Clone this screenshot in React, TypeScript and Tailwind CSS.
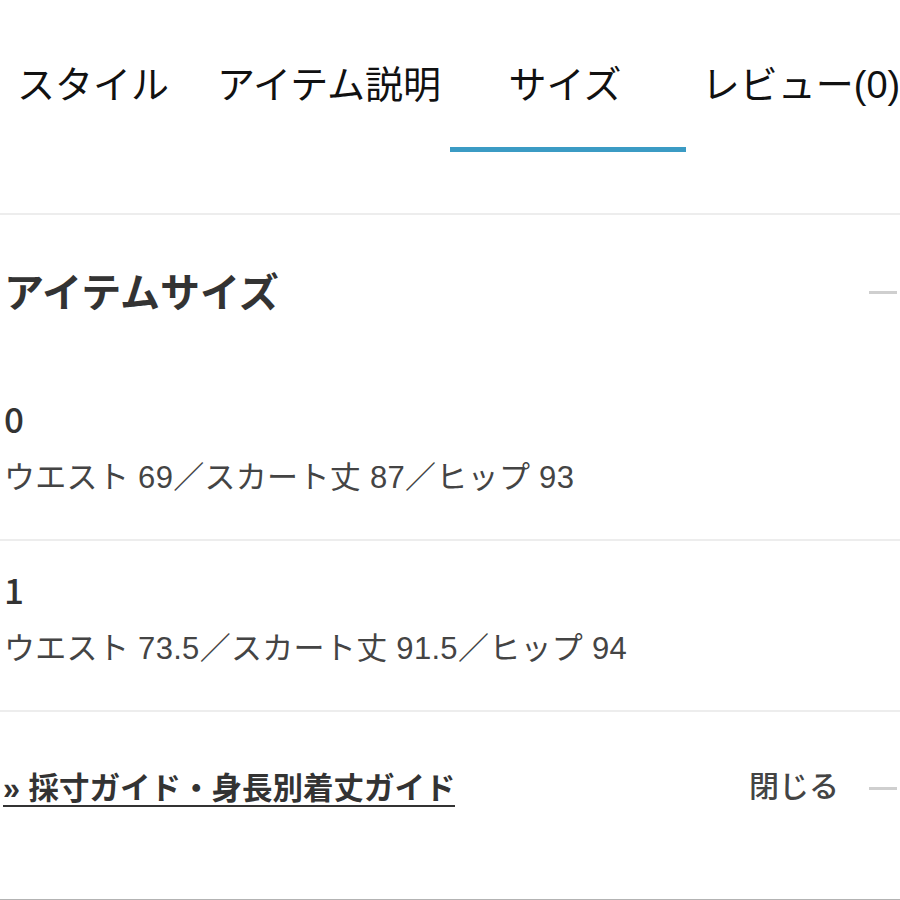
const tabs = ['スタイル', 'アイテム説明', 'サイズ', 'レビュー(0)']
const activeTab = 2

const sizes = [
  { label: '0', detail: 'ウエスト 69／スカート丈 87／ヒップ 93' },
  { label: '1', detail: 'ウエスト 73.5／スカート丈 91.5／ヒップ 94' },
]

function Minus() {
  return <span className="block h-[3px] w-[28px] bg-[#cfcfcf]" />
}

export default function App() {
  return (
    <div
      className="h-[900px] w-[900px] overflow-hidden bg-white text-[#333]"
      style={{ fontFamily: '"Liberation Sans", "Noto Sans CJK JP", sans-serif' }}
    >
      {/* Tabs */}
      <nav className="ml-[-22px] flex">
        {tabs.map((tab, i) => (
          <div
            key={tab}
            className={[
              'flex w-[236px] shrink-0 justify-center whitespace-nowrap border-b-[5px] pb-[33px] pr-[6px] pt-[57px] text-[38px] leading-[57px] text-[#111]',
              i === activeTab ? 'border-[#3b9bc4]' : 'border-transparent',
            ].join(' ')}
          >
            {tab}
          </div>
        ))}
      </nav>

      <div className="mt-[61px] h-[2px] bg-[#ededed]" />

      {/* Section header */}
      <div className="flex h-[155px] items-center justify-between pl-[4px] pr-[3px]">
        <h2 className="text-[40px] font-bold leading-[46px] text-[#333]">アイテムサイズ</h2>
        <Minus />
      </div>

      {/* Size rows */}
      {sizes.map((s) => (
        <div key={s.label}>
          <div className="px-[4px] pb-[39px] pt-[26px]">
            <div className="font-['Noto_Sans_CJK_JP',sans-serif] text-[35px] font-medium leading-[44px] text-[#333]">
              {s.label}
            </div>
            <div className="mt-[16px] text-[31px] leading-[44px] tracking-[0.3px] text-[#444]">{s.detail}</div>
          </div>
          <div className="h-[2px] bg-[#ededed]" />
        </div>
      ))}

      {/* Footer */}
      <div className="flex h-[187px] items-start justify-between pl-[3px] pr-[3px] pt-[59px]">
        <a className="inline-block border-b-2 border-[#333] text-[30.5px] font-bold leading-[34px] text-[#333]">
          » 採寸ガイド・身長別着丈ガイド
        </a>
        <div className="flex h-[34px] items-center gap-[30px]">
          <span className="-mt-[3px] text-[30px] font-medium leading-[34px] text-[#444]">閉じる</span>
          <Minus />
        </div>
      </div>
      <div className="h-[3px] bg-[#b3b3b3]" />
    </div>
  )
}
